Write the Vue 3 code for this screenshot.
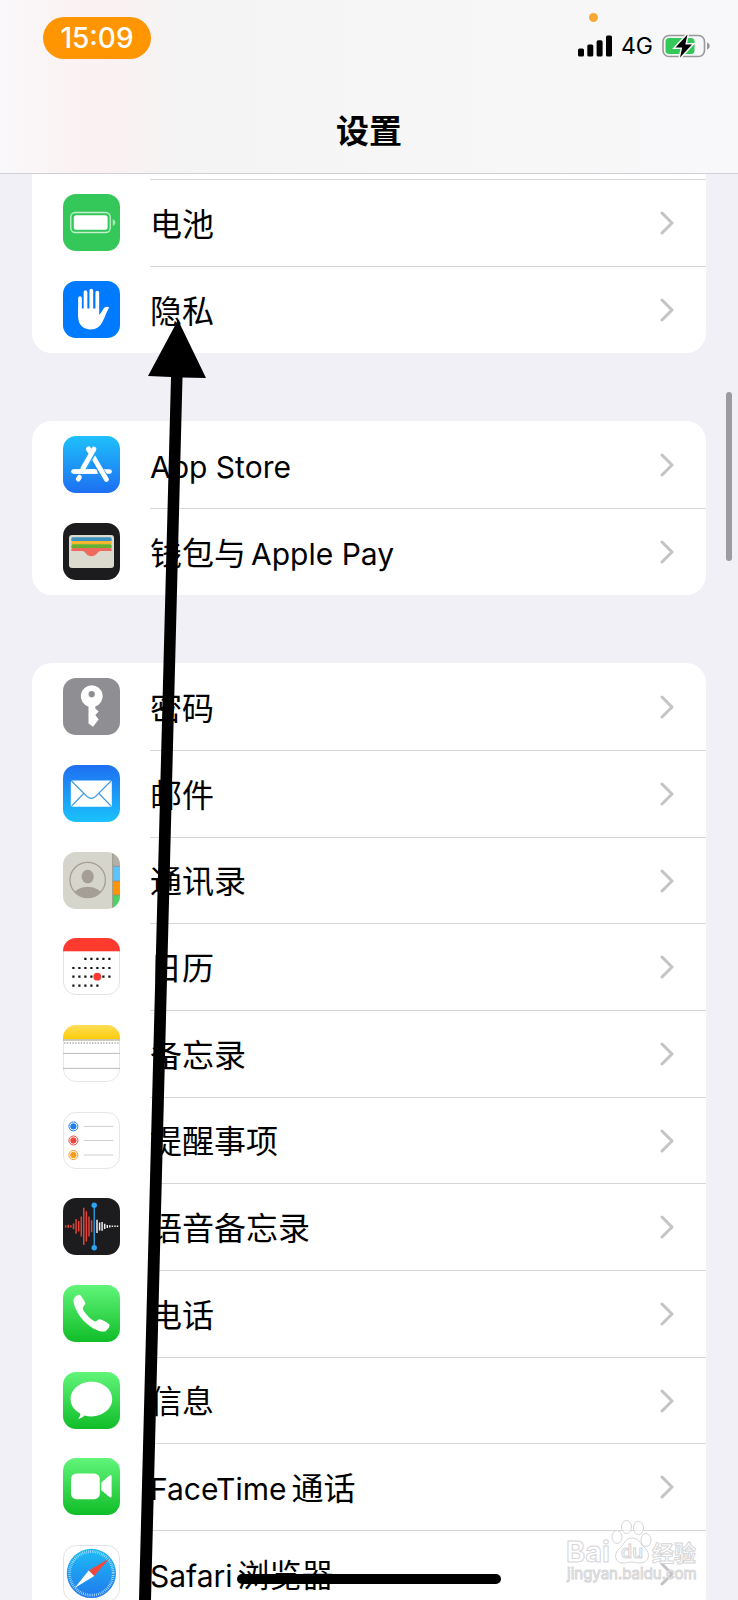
<template>
  <div class="screen">
    <!-- Shared icon shapes -->
    <svg class="sprite" aria-hidden="true">
      <defs>
        <linearGradient id="g-store" x1="0" y1="0" x2="0" y2="1">
          <stop offset="0" stop-color="#1fc0fb" />
          <stop offset="1" stop-color="#1d6ff2" />
        </linearGradient>
        <linearGradient id="g-mail" x1="0" y1="0" x2="0" y2="1">
          <stop offset="0" stop-color="#1e6ff2" />
          <stop offset="1" stop-color="#1ac2fb" />
        </linearGradient>
        <linearGradient id="g-green" x1="0" y1="0" x2="0" y2="1">
          <stop offset="0" stop-color="#61f57a" />
          <stop offset="1" stop-color="#10bd28" />
        </linearGradient>
        <linearGradient id="g-notes" x1="0" y1="0" x2="0" y2="1">
          <stop offset="0" stop-color="#ffde58" />
          <stop offset="1" stop-color="#fccb08" />
        </linearGradient>
        <linearGradient id="g-safari" x1="0" y1="0" x2="0" y2="1">
          <stop offset="0" stop-color="#1dbcf5" />
          <stop offset="1" stop-color="#2079ee" />
        </linearGradient>
        <clipPath id="tile"><rect width="57" height="57" rx="13" /></clipPath>
        <clipPath id="face"><circle cx="24.7" cy="28" r="17.5" /></clipPath>
      </defs>

      <symbol id="battery" viewBox="0 0 57 57">
        <rect width="57" height="57" rx="13" fill="#34c759" />
        <rect x="7.8" y="18.5" width="39.4" height="20" rx="4.5" fill="none" stroke="#c4f0ce" stroke-width="1.3" />
        <rect x="10.8" y="21.2" width="33.8" height="14.6" rx="2.5" fill="#fff" />
        <path d="M49.7 25.3c3.6 1 3.6 5.6 0 6.6z" fill="#a6e8b5" />
      </symbol>

      <symbol id="privacy" viewBox="0 0 57 57">
        <rect width="57" height="57" rx="13" fill="#007aff" />
        <g stroke="#fff" stroke-width="3.7" stroke-linecap="round">
          <path d="M17 17v18M22.5 11.2V32M28.3 9.6V32M34.3 11.5V32" />
        </g>
        <path d="M15.2 27.5H36.1V33.5C37.5 33 39.3 29.5 40.3 28C41.8 25.7 44.2 25.3 46.3 26.6C44 29.3 42.2 36 39.7 40.5C37 45.7 33.3 48.5 27.8 48.5C20 48.5 15.2 43.6 15.2 36z" fill="#fff" />
      </symbol>

      <symbol id="store" viewBox="0 0 57 57">
        <rect width="57" height="57" rx="13" fill="url(#g-store)" />
        <g fill="none" stroke-linecap="round">
          <path d="M10.5 35.5H46.5" stroke="#fff" stroke-width="4.6" />
          <path d="M29 22L43.5 43.5" stroke="#208df5" stroke-width="7" stroke-linecap="butt" />
          <path d="M25.5 13L43.5 43.5" stroke="#fff" stroke-width="4.8" />
          <path d="M30.5 15L20.5 32.5" stroke="#1fa8f9" stroke-width="7" stroke-linecap="butt" />
          <path d="M25.5 13L28 17M31 13L19.8 32.8M16.4 41.2L15.3 43.2" stroke="#fff" stroke-width="4.8" />
          <path d="M12 35.5H32" stroke="#fff" stroke-width="4.6" />
        </g>
      </symbol>

      <symbol id="wallet" viewBox="0 0 57 57">
        <rect width="57" height="57" rx="13" fill="#1c1c1e" />
        <rect x="6" y="12" width="45" height="33" rx="3" fill="#dcd9ce" />
        <path d="M8.3 18V16Q8.3 14.3 10 14.3H47Q48.7 14.3 48.7 16V18z" fill="#3f92c0" />
        <path d="M8.3 21.5V19.5Q8.3 18 10 18H47Q48.7 18 48.7 19.5V21.5z" fill="#f6b52c" />
        <path d="M8.3 25V23Q8.3 21.3 10 21.3H47Q48.7 21.3 48.7 23V25z" fill="#64b030" />
        <path d="M8.3 28V26.5Q8.3 25 10 25H47Q48.7 25 48.7 26.5V28H38C35.5 28 35.5 29 34 30.5C31 34 25.5 34 23 30.5C21.5 29 21.5 28 19 28z" fill="#f0695e" />
      </symbol>

      <symbol id="key" viewBox="0 0 57 57">
        <rect width="57" height="57" rx="13" fill="#8e8e93" />
        <path d="M28.7 7.2A11 11 0 0 1 32.3 28.6V30.5L35.7 33.5L32.3 37L35.7 41.5L30 48.8L25.5 45.5V28.7A11 11 0 0 1 28.7 7.2z" fill="#fff" />
        <circle cx="28.7" cy="16.2" r="3.1" fill="#8e8e93" />
      </symbol>

      <symbol id="mail" viewBox="0 0 57 57">
        <rect width="57" height="57" rx="13" fill="url(#g-mail)" />
        <rect x="7.8" y="15.5" width="41" height="26.3" rx="1.5" fill="#fff" />
        <path d="M8.5 16L24 31.5Q28.3 35.3 32.6 31.5L48 16M8.5 41L20.7 28.5M48 41L36 28.5" fill="none" stroke="#3f9ae0" stroke-width="1.1" />
      </symbol>

      <symbol id="contacts" viewBox="0 0 57 57">
        <g clip-path="url(#tile)">
          <rect width="57" height="57" fill="#d6d5cb" />
          <rect x="49.7" width="8" height="14.3" fill="#b3aea6" />
          <rect x="49.7" y="14.3" width="8" height="14.7" fill="#5ac4fb" />
          <rect x="49.7" y="29" width="8" height="14" fill="#ff9506" />
          <rect x="49.7" y="43" width="8" height="14" fill="#4fd265" />
          <path d="M49.7 0V57M50 14.3H57M50 29H57M50 43H57" stroke="#8f8b82" stroke-width=".8" />
        </g>
        <circle cx="24.7" cy="28" r="17.7" fill="none" stroke="#a59e97" stroke-width="1.3" />
        <ellipse cx="24.7" cy="24.6" rx="6.1" ry="6.8" fill="#a59e97" />
        <ellipse cx="24.7" cy="44" rx="14.5" ry="9.3" fill="#a59e97" clip-path="url(#face)" />
      </symbol>

      <symbol id="calendar" viewBox="0 0 57 57">
        <rect x=".5" y=".5" width="56" height="56" rx="12.5" fill="#fff" stroke="#e3e3e5" />
        <rect width="57" height="13.3" fill="#ff3b30" clip-path="url(#tile)" />
        <g stroke="#111" stroke-width="2.2" stroke-dasharray="2.2 3.8">
          <path d="M21.3 20.8H48M9.3 30H48M9.3 38.7H48M9.3 47.7H36" />
        </g>
        <circle cx="34.3" cy="38.7" r="3.9" fill="#fb3b32" />
      </symbol>

      <symbol id="notes" viewBox="0 0 57 57">
        <rect x=".5" y=".5" width="56" height="56" rx="12.5" fill="#fff" stroke="#e6e6e8" />
        <g clip-path="url(#tile)">
          <rect width="57" height="14.3" fill="url(#g-notes)" />
          <path d="M0 15H57" stroke="#bcb9a6" stroke-width="1.4" />
          <path d="M1 18H57" stroke="#aaa" stroke-width="1.4" stroke-dasharray="1.4 1.4" />
          <path d="M0 28.4H57M0 43.4H57" stroke="#bcbcbe" />
        </g>
      </symbol>

      <symbol id="reminders" viewBox="0 0 57 57">
        <rect x=".5" y=".5" width="56" height="56" rx="12.5" fill="#fff" stroke="#e6e6e8" />
        <g fill="#1f7ff0" stroke="#1f7ff0"><circle cx="10.4" cy="14.4" r="4.5" fill="none" /><circle cx="10.4" cy="14.4" r="2.7" /></g>
        <g fill="#ee463b" stroke="#ee463b"><circle cx="10.4" cy="28.5" r="4.5" fill="none" /><circle cx="10.4" cy="28.5" r="2.7" /></g>
        <g fill="#f79b1b" stroke="#f79b1b"><circle cx="10.4" cy="43" r="4.5" fill="none" /><circle cx="10.4" cy="43" r="2.7" /></g>
        <path d="M20.7 14.4H50.3M20.7 28.5H50.3M20.7 43H50.3" stroke="#cfcfd1" />
      </symbol>

      <symbol id="voice" viewBox="0 0 57 57">
        <rect width="57" height="57" rx="13" fill="#1c1c1e" />
        <path d="M2.7 27.3v2.2M5.3 26.7v3.4M7.9 27.2v2.4M10.5 25.6v5.6M13.1 21v14.7M15.7 23v10.6M18.3 18.4v20M20.8 9.7v37.4M23.4 13.2v30.4M26 18.4v20M28.6 22.3v12" stroke="#e0443c" stroke-width="1.5" />
        <path d="M34 21.8v13.2M36.6 24.4v8M39.1 24v8.8M41.7 25.7v5.4M44.3 26.9v3M46.8 27.2v2.4M49.4 27.6v1.5M52 27.6v1.5M54.5 27.6v1.5" stroke="#eee" stroke-width="1.5" />
        <path d="M31.2 7V50" stroke="#2ba4f2" stroke-width="1.3" />
        <circle cx="31.2" cy="7.2" r="2.7" fill="#2ba4f2" />
        <circle cx="31.2" cy="49.7" r="2.7" fill="#2ba4f2" />
      </symbol>

      <symbol id="phone" viewBox="0 0 57 57">
        <rect width="57" height="57" rx="13" fill="url(#g-green)" />
        <path d="M10.5 15.5C10.5 12.5 14.5 9.5 16.5 9.8C18 10 21.5 16 22.3 18C22.8 20 19.5 21.5 19.8 23.5C20.5 27 27.5 34.5 31.5 36.3C33.5 37 35 33.8 37 34.2C39 34.6 45.5 38 46.5 39.5C47.3 41.5 44 46 41.5 46.5C36 47.5 26 42 19.5 34.5C14 28 10.5 20 10.5 15.5Z" fill="#fff" />
      </symbol>

      <symbol id="messages" viewBox="0 0 57 57">
        <rect width="57" height="57" rx="13" fill="url(#g-green)" />
        <path d="M28.4 9.8C40 9.8 49.2 17.5 49.2 27.1S40 44.4 28.4 44.4C26 44.4 23.7 44.1 21.6 43.5C19.7 45.4 17.5 46.6 15 46.8C16.6 45.3 17.4 43.5 17.3 41.6C11.3 38.6 7.6 33.2 7.6 27.1C7.6 17.5 16.9 9.8 28.4 9.8Z" fill="#fff" />
      </symbol>

      <symbol id="facetime" viewBox="0 0 57 57">
        <rect width="57" height="57" rx="13" fill="url(#g-green)" />
        <rect x="8" y="15.6" width="28.8" height="25.6" rx="5.5" fill="#fff" />
        <path d="M38.3 24.6L46.2 17.8Q48.6 16 48.6 18.6V38Q48.6 40.6 46.2 38.8L38.3 32.2z" fill="#fff" />
      </symbol>

      <symbol id="safari" viewBox="0 0 57 57">
        <rect x=".5" y=".5" width="56" height="56" rx="12.5" fill="#fff" stroke="#e3e3e5" />
        <circle cx="28.4" cy="28.4" r="24.6" fill="url(#g-safari)" />
        <circle cx="28.4" cy="28.4" r="21.8" fill="none" stroke="#bfe3fb" stroke-width="2.8" stroke-dasharray=".7 1.2" />
        <path d="M46.2 13.6L25.7 25.6L31.2 31.1z" fill="#f0483e" />
        <path d="M11.6 43L25.7 25.6L31.2 31.1z" fill="#fff" />
      </symbol>
    </svg>

    <header class="header">
      <div class="status">
        <span class="clock">15:09</span>
        <div class="signals">
          <span class="mic-dot"></span>
          <svg class="bars" viewBox="0 0 34 22" aria-hidden="true">
            <rect x="0" y="13.5" width="6" height="8" rx="1.6" />
            <rect x="9.3" y="9.5" width="6" height="12" rx="1.6" />
            <rect x="18.6" y="5.3" width="6" height="16.2" rx="1.6" />
            <rect x="28" y=".5" width="6" height="21" rx="1.6" />
          </svg>
          <span class="network">4G</span>
          <svg class="power" viewBox="0 0 49 24" aria-hidden="true">
            <rect x="1" y="1.5" width="41.5" height="21" rx="6" fill="none" stroke="#98989a" stroke-width="1.6" />
            <rect x="3.5" y="4" width="29" height="16" rx="3.5" fill="#34c759" />
            <path d="M45 8.3q2.8 1 2.8 3.7T45 15.7z" fill="#98989a" />
            <path d="M25.5 .5L13.5 13.5H20.2L18 23.5L30 10.5H23.3z" fill="#000" stroke="#f7f7f7" stroke-width="3" paint-order="stroke" />
          </svg>
        </div>
      </div>
      <h1 class="title">设置</h1>
    </header>

    <main class="groups">
      <ul v-for="(group, i) in groups" :key="i" class="group" :class="{ continued: i === 0 }">
        <li v-for="item in group" :key="item.icon">
          <a class="row" href="#">
            <svg class="icon" aria-hidden="true"><use :href="'#' + item.icon" /></svg>
            <span class="content">
              <span class="label">
                <span v-for="part in item.label" :key="part" :class="{ latin: isLatin(part) }">{{ part }}</span>
              </span>
              <svg class="chevron" viewBox="0 0 14 24" aria-hidden="true">
                <path d="M2 2L12 12L2 22" />
              </svg>
            </span>
          </a>
        </li>
      </ul>
    </main>

    <div class="scrollbar"></div>
    <div class="home-bar"></div>

    <!-- Arrow pointing at the privacy row -->
    <svg class="arrow" viewBox="0 0 80 1290" aria-hidden="true">
      <path d="M48 10L76 68L52.5 67.5L21 1290H9L41 67L18 66z" />
    </svg>

    <svg class="watermark" viewBox="0 0 140 70" aria-hidden="true">
      <g class="outline">
        <ellipse cx="51" cy="22" rx="5" ry="6.5" />
        <ellipse cx="60.5" cy="12" rx="5" ry="6.5" />
        <ellipse cx="72.5" cy="13" rx="5" ry="6.5" />
        <ellipse cx="80" cy="25" rx="5" ry="6.5" />
        <path d="M66 23C73 23 75 30 79 33C85 38 83 48 74 48C70 48 69 47 66 47S61 48 57 48C49 48 47 39 53 34C58 30 59 23 66 23Z" />
        <text x="0" y="47" class="wm-brand">Bai</text>
        <text x="55" y="43" class="wm-du">du</text>
        <text x="86" y="46" class="wm-cjk">经验</text>
        <text x="1" y="64" class="wm-url">jingyan.baidu.com</text>
      </g>
    </svg>
  </div>
</template>

<script setup>
// Latin and Chinese runs are kept apart, they are set in different sizes
const groups = [
  [
    { icon: 'battery', label: ['电池'] },
    { icon: 'privacy', label: ['隐私'] }
  ],
  [
    { icon: 'store', label: ['App Store'] },
    { icon: 'wallet', label: ['钱包与', 'Apple Pay'] }
  ],
  [
    { icon: 'key', label: ['密码'] },
    { icon: 'mail', label: ['邮件'] },
    { icon: 'contacts', label: ['通讯录'] },
    { icon: 'calendar', label: ['日历'] },
    { icon: 'notes', label: ['备忘录'] },
    { icon: 'reminders', label: ['提醒事项'] },
    { icon: 'voice', label: ['语音备忘录'] },
    { icon: 'phone', label: ['电话'] },
    { icon: 'messages', label: ['信息'] },
    { icon: 'facetime', label: ['FaceTime', '通话'] },
    { icon: 'safari', label: ['Safari', '浏览器'] }
  ]
];

const isLatin = (text) => /^[A-Za-z ]+$/.test(text);
</script>

<style>
body {
  margin: 0;
  background: #f1f0f7;
}
</style>

<style scoped>
.screen {
  position: relative;
  height: 100vh;
  overflow: hidden;
  display: flex;
  flex-direction: column;
  background: #f1f0f7;
  color: #000;
  font-family: Inter, "Noto Sans CJK SC", sans-serif;
}

.sprite {
  position: absolute;
  width: 0;
  height: 0;
}

.header {
  flex: none;
  box-sizing: border-box;
  height: 174px;
  padding-top: 17px;
  border-bottom: 1px solid #d2d1d5;
  background: linear-gradient(90deg, #f9f8fa 0, #fbf3f3 70px, #faf2f2 120px, #f4f4f4 180px, #f6f6f6 50%, #f8f8fa 100%);
}

.status {
  display: flex;
  justify-content: space-between;
  padding: 0 27px 0 43px;
}

.clock {
  width: 108px;
  height: 42px;
  border-radius: 21px;
  background: #ff9500;
  color: #fff;
  font-size: 28px;
  font-weight: 500;
  line-height: 43px;
  text-align: center;
}

.signals {
  position: relative;
  display: flex;
  align-items: center;
  height: 58px;
}

.mic-dot {
  position: absolute;
  top: -4px;
  left: 11px;
  width: 9px;
  height: 9px;
  border-radius: 50%;
  background: #fca836;
}

.bars {
  width: 34px;
  height: 22px;
}

.network {
  margin: 0 9px;
  font-size: 23px;
  line-height: 28px;
}

.power {
  width: 49px;
  height: 24px;
}

.title {
  margin: 36px 0 0;
  font-size: 33px;
  font-weight: 700;
  line-height: 40px;
  text-align: center;
}

.groups {
  display: flex;
  flex-direction: column;
  gap: 68px;
  padding: 0 32px;
}

.group {
  margin: 0;
  padding: 0;
  list-style: none;
  border-radius: 20px;
  background: #fff;
}

.continued {
  padding-top: 5px;
  border-radius: 0 0 20px 20px;
}

.row {
  display: flex;
  align-items: center;
  gap: 30px;
  height: 87px;
  padding-left: 31px;
  color: inherit;
  text-decoration: none;
}

li:nth-child(3n) .row {
  height: 86px;
}

.icon {
  flex: none;
  width: 57px;
  height: 57px;
}

.content {
  flex: 1;
  align-self: stretch;
  display: flex;
  align-items: center;
  justify-content: space-between;
  padding-right: 32px;
  border-top: 1px solid transparent;
}

li + li .content,
.continued .content {
  border-top-color: #d6d6d8;
}

.label {
  display: flex;
  align-items: baseline;
  gap: 5px;
  padding-top: 3px;
  font-size: 32px;
  line-height: 40px;
}

.latin {
  font-size: 30px;
}

.chevron {
  width: 14px;
  height: 24px;
  fill: none;
  stroke: #c4c4c6;
  stroke-width: 3;
  stroke-linecap: round;
  stroke-linejoin: round;
}

.scrollbar {
  position: absolute;
  top: 392px;
  right: 6px;
  width: 6px;
  height: 169px;
  border-radius: 3px;
  background: #9c9ba1;
}

.home-bar {
  position: absolute;
  bottom: 16px;
  left: 50%;
  width: 264px;
  height: 10px;
  margin-left: -132px;
  border-radius: 5px;
  background: #000;
}

.arrow {
  position: absolute;
  top: 310px;
  left: 130px;
  width: 80px;
  height: 1290px;
}

.watermark {
  position: absolute;
  right: 32px;
  bottom: 15px;
  width: 140px;
  height: 70px;
}

.outline {
  fill: #fff;
  fill-opacity: 0.6;
  stroke: #d6d6d8;
  stroke-width: 1;
}

.wm-brand {
  font-size: 29px;
  font-weight: 700;
}

.wm-du {
  font-size: 18px;
  font-weight: 500;
}

.wm-cjk {
  font-size: 22px;
  font-weight: 700;
}

.wm-url {
  font-size: 15px;
}
</style>
